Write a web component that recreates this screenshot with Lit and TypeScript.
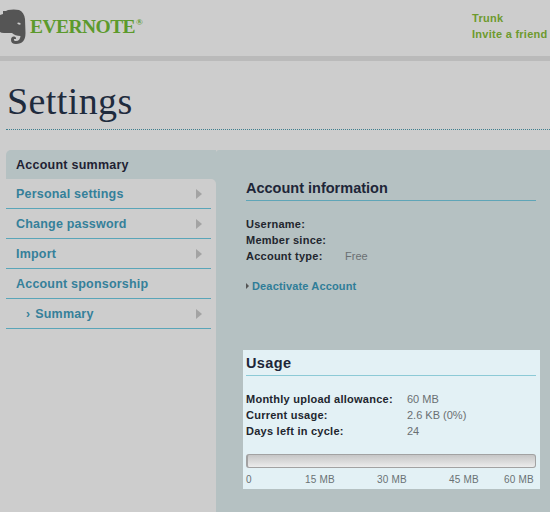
import { LitElement, html, css } from "lit";
import { customElement } from "lit/decorators.js";

@customElement("app-root")
export class AppRoot extends LitElement {
  static styles = css`
    :host { display: block; width: 550px; height: 512px; overflow: hidden; background: #cdcdcd; font-family: "Liberation Sans", Arial, sans-serif; font-size: 11px; }
    .top { height: 56px; display: flex; justify-content: space-between; border-bottom: 5px solid #bababa; box-sizing: content-box; }
    .logo { display: flex; align-items: flex-start; }
    .logo svg { display: block; margin-top: 9px; width: 26px; height: 36px; }
    .word { font-family: "Liberation Serif", serif; font-weight: bold; font-size: 19.5px; color: #5c9a2c; letter-spacing: -0.55px; margin: 16px 0 0 4px; line-height: 21px; white-space: nowrap; }
    .word sup { font-size: 9px; font-weight: bold; line-height: 0; vertical-align: 8px; letter-spacing: 0; margin-left: 1px; }
    .links { padding: 10px 3px 0 0; width: 75px; color: #6d9a2e; font-weight: bold; font-size: 11px; line-height: 16px; white-space: nowrap; letter-spacing: 0.27px; }
    h1 { margin: 0; padding: 18px 0 0 7px; height: 50px; font-family: "Liberation Serif", serif; font-weight: normal; font-size: 38px; line-height: 44px; color: #1f2b3d; letter-spacing: 0.4px; box-sizing: content-box; }
    .rule { margin-left: 6px; border-bottom: 1px dotted #3f7f8f; height: 0; }
    .main { display: flex; margin-top: 20px; margin-left: 6px; height: 362px; }
    nav { width: 210px; flex: none; background: #b5c1c2; border-top-left-radius: 5px; display: flex; flex-direction: column; }
    .active { height: 29px; line-height: 30px; padding-left: 10px; font-weight: bold; font-size: 12.5px; letter-spacing: 0.25px; color: #1f2233; flex: none; }
    .rest { flex: 1; background: #cdcdcd; border-top-right-radius: 5px; }
    .item { height: 30px; box-sizing: border-box; border-bottom: 1px solid #5aa5b8; width: 205px; padding-left: 10px; display: flex; align-items: center; justify-content: space-between; font-weight: bold; font-size: 12.5px; letter-spacing: 0.2px; color: #35809a; }
    .item i { width: 0; height: 0; border-left: 6px solid #a3a3a3; border-top: 5.5px solid transparent; border-bottom: 5.5px solid transparent; margin-right: 9px; }
    .sub { padding-left: 20px; }
    .sub b { font-size: 12px; margin-right: 5px; }
    .panel { flex: 1; background: #b5c1c2; border-top-left-radius: 3px; }
    .acct { padding: 29px 14px 0 30px; }
    h2 { margin: 0; font-size: 14.5px; font-weight: bold; color: #1e2638; line-height: 18px; padding-bottom: 3px; border-bottom: 1px solid #5fa5b7; }
    .rows { margin-top: 15px; display: grid; grid-template-columns: 99px 1fr; grid-auto-rows: 16px; line-height: 16px; font-size: 11px; }
    .rows b { color: #22262e; letter-spacing: 0.25px; white-space: nowrap; }
    .rows span { color: #6a6f72; }
    .deact { margin-top: 14px; display: flex; align-items: center; gap: 3px; font-weight: bold; color: #2f7d98; font-size: 11px; letter-spacing: 0.15px; height: 16px; }
    .deact i { width: 0; height: 0; border-left: 3px solid #555; border-top: 3px solid transparent; border-bottom: 3px solid transparent; }
    .usage { margin: 56px 10px 0 27px; background: #e3f1f5; height: 139px; padding: 4px 4px 0 3px; box-sizing: border-box; }
    .usage h2 { border-bottom-color: #8ccad6; letter-spacing: 0.4px; }
    .usage .rows { grid-template-columns: 161px 1fr; }
    .bar { margin-top: 15px; height: 14px; box-sizing: border-box; border: 1px solid #a2a2a2; border-left-width: 2px; border-radius: 3px; background: linear-gradient(#c6c6c6, #ececec); }
    .scale { display: grid; grid-template-columns: 59px 72px 72px 55px auto; color: #6a7174; font-size: 10px; letter-spacing: 0.2px; line-height: 12px; margin-top: 6px; white-space: nowrap; }
  `;

  render() {
    return html`
      <div class="top">
        <div class="logo">
          <svg viewBox="0 0 26 36"><path fill="#555" fill-rule="evenodd" d="M0 6 L3 5 L3 2 L6 2 L8 1 Q14 0 19 1 Q24 3 25 10 L25.5 24 Q25.5 35 16 35 Q11 35 11 31 Q11 27 14.5 27.5 Q16.5 28 16 30 L14 30 Q13.5 32 16 32 Q20 32 20.5 27 Q15 27 12 24 L4 24 Q1 24 0 23 Z M17 14 Q19.500 12.500 21 15 Q19 17 17 14 Z"/></svg>
          <div class="word">EVERNOTE<sup>®</sup></div>
        </div>
        <div class="links"><div>Trunk</div><div>Invite a friend</div></div>
      </div>
      <h1>Settings</h1>
      <div class="rule"></div>
      <div class="main">
        <nav>
          <div class="active">Account summary</div>
          <div class="rest">
            <div class="item">Personal settings<i></i></div>
            <div class="item">Change password<i></i></div>
            <div class="item">Import<i></i></div>
            <div class="item">Account sponsorship</div>
            <div class="item sub"><span><b>›</b>Summary</span><i></i></div>
          </div>
        </nav>
        <section class="panel">
          <div class="acct">
            <h2>Account information</h2>
            <div class="rows">
              <b>Username:</b><span></span>
              <b>Member since:</b><span></span>
              <b>Account type:</b><span>Free</span>
            </div>
            <div class="deact"><i></i>Deactivate Account</div>
          </div>
          <div class="usage">
            <h2>Usage</h2>
            <div class="rows">
              <b>Monthly upload allowance:</b><span>60 MB</span>
              <b>Current usage:</b><span>2.6 KB (0%)</span>
              <b>Days left in cycle:</b><span>24</span>
            </div>
            <div class="bar"></div>
            <div class="scale"><span>0</span><span>15 MB</span><span>30 MB</span><span>45 MB</span><span>60 MB</span></div>
          </div>
        </section>
      </div>
    `;
  }
}
